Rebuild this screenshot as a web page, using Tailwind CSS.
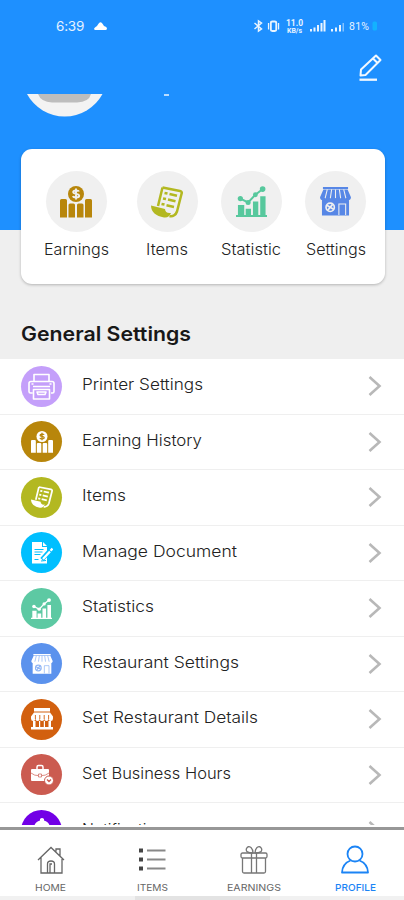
<!DOCTYPE html>
<html lang="en">
<head>
<meta charset="utf-8">
<title>Profile</title>
<script src="https://cdn.jsdelivr.net/npm/@tailwindcss/browser@4"></script>
</head>
<body class="bg-[#efefef]">
<svg class="hidden">
  <symbol id="coins" viewBox="0 0 32 32">
    <path fill="currentColor" d="M0 14.500q0-1.500 1.500-1.500h4q1.500 0 1.500 1.500V31.500H0zM8.500 19q0-1.500 1.500-1.500h3.500q1.500 0 1.500 1.500v12.500H8.500zM17 19q0-1.500 1.500-1.500H22q1.500 0 1.500 1.500v12.500H17zM25 14.500q0-1.500 1.500-1.500h4q1.500 0 1.500 1.500v17h-7z"/>
    <circle cx="16" cy="8" r="8" fill="currentColor"/>
    <path fill="none" stroke="var(--hole)" stroke-width="1.900" d="M19 5.500c-.5-1.300-5.800-1.700-5.800.6 0 2.400 6 1.200 6 3.700 0 2.300-5.700 2.200-6.200.2M16 2.500v11"/>
  </symbol>
  <symbol id="receipt" viewBox="0 0 32 32">
    <path fill="none" stroke="currentColor" stroke-width="2.500" stroke-linejoin="round" d="M11.500 1.500L29 5c2 .5 2 1.500 1.500 3L26 25.500c-1 3-4 5.500-7.500 4.500M11.500 1.500L7 20"/>
    <path fill="currentColor" d="M0 19.500l14 3.500c.3 3 2 4.500 6 4-1 3-3.500 5-7 4.500C5 30 0 26 0 19.500z"/>
    <path fill="none" stroke="currentColor" stroke-width="2.600" d="M13.500 7l3 .6M18.500 8l7.500 1.700M12 12.500l3 .6M17 13.600l7.500 1.700M10.500 18l3 .6M15.500 19.200l7.500 1.700"/>
  </symbol>
  <symbol id="chart" viewBox="0 0 32 32">
    <path fill="currentColor" d="M0 30h32v2H0zM2 19.500h6.500V31H2zM10 23.500h5.500V31H10zM17.500 16H23v15h-5.500zM25 10.500h5.500V31H25z"/>
    <path fill="none" stroke="currentColor" stroke-width="2" d="M4.500 13l8 4 7.500-8 7-5.500"/>
    <g fill="currentColor"><circle cx="4.500" cy="13" r="2.700"/><circle cx="12.500" cy="17" r="2.600"/><circle cx="20" cy="9" r="2.500"/><circle cx="27.500" cy="3.200" r="2.900"/></g>
  </symbol>
  <symbol id="store" viewBox="0 0 32 30">
    <path fill="currentColor" d="M3 0h26v2H3zM2 12h28v17.500H2zM3.500 2.500h25L32 10.500c0 4-4.500 4-5.300 1-.8 3-4.600 3-5.400 0-.8 3-4.500 3-5.300 0-.8 3-4.500 3-5.300 0-.8 3-4.600 3-5.400 0C4.500 14.500 0 14.500 0 10.500z"/>
    <path fill="none" stroke="var(--hole)" stroke-width="1.100" d="M7.500 2.500l-2.200 9M12 2.500l-1.300 9M16 2.500v9M20 2.500l1.300 9M24.500 2.500l2.200 9M19.500 29V17.500h7V29"/>
    <circle cx="10.500" cy="21" r="4.300" fill="none" stroke="var(--hole)" stroke-width="1.700"/>
    <path stroke="var(--hole)" stroke-width="1.800" d="M7 19l7 4M8 24l5-6"/>
  </symbol>
  <symbol id="chev" viewBox="0 0 14 20"><path fill="none" stroke="#b8b8b8" stroke-width="2.600" d="M1.500 1L11.500 10l-10 9"/></symbol>
</svg>

<div class="flex h-[900px] w-[404px] flex-col overflow-hidden bg-[#efefef] font-[Inter,sans-serif]">
  <header class="h-[230px] shrink-0 bg-[#1e90ff]">
    <div class="flex h-[52px] items-center pl-[56px] pr-[25px] text-white">
      <span class="w-[38px] text-[13.500px] font-normal tracking-[-0.2px] text-[#e5f2ff]">6:39</span>
      <svg class="h-[8px] w-[13px]" viewBox="0 0 13 8"><path fill="#fff" d="M1 8Q-.5 7.500.5 6q.9-1 2.500-2Q5 .2 6.500.2T10 4q3 .8 3 2.500-.2 1.500-1.500 1.500z"/></svg>
      <svg class="ml-auto h-[16px] w-[126px] opacity-90" viewBox="0 0 126 16">
        <path fill="none" stroke="#fff" stroke-width="1.500" d="M1.500 5l7 6-3 2V3l3 2-7 6"/>
        <rect x="17.800" y="3.500" width="5.500" height="9.500" rx="1.500" fill="none" stroke="#fff" stroke-width="1.900"/>
        <path stroke="#fff" stroke-width="1.200" d="M15.500 5v6.500M25.600 5v6.500"/>
        <text x="33" y="8" font-family="Roboto" font-weight="700" font-size="9" textLength="17" lengthAdjust="spacingAndGlyphs" fill="#fff">11.0</text>
        <text x="34" y="15" font-family="Roboto" font-weight="700" font-size="7" textLength="15" lengthAdjust="spacingAndGlyphs" fill="#fff">KB/s</text>
        <path fill="#fff" d="M57 11h2v2.500h-2zM60.500 9.500h2v4h-2zM64 7h2v6.500h-2zM67.500 5h2v8.500h-2zM70.500 2h2v11.500h-2zM78 11h2v2.500h-2zM82 9.500h2v4h-2zM86 7h2v6.500h-2z"/>
        <path fill="#fff" opacity=".5" d="M89.500 5H91v8.500h-1.500z"/>
        <text x="96" y="12" font-family="Roboto" font-size="10.500" textLength="20" fill="#fff">81%</text>
        <rect x="119.500" y="3.500" width="4.500" height="9" rx="1.500" fill="#12b6ff"/>
      </svg>
    </div>
    <div class="flex h-[42px] justify-end pr-[21px]">
      <svg class="h-[32px] w-[26px]" viewBox="0 0 26 32"><path fill="none" stroke="#f2f8ff" stroke-width="2" stroke-linejoin="round" d="M3.500 23.500l.5-6L19 3.500l4.500 4.500L8.500 23zM16 6.500l4.500 4.500"/><path stroke="#f2f8ff" stroke-width="2.300" d="M2.500 27.700H20"/></svg>
    </div>
    <div class="flex h-[55px]">
      <svg class="ml-[27px] h-[23px] w-[76px]" viewBox="0 0 76 23"><path fill="#f3f3f3" d="M0 0h75.500A43 43 0 0 1 0 0z"/><path fill="#bdbdbd" d="M11 0h53q-2 8-14 8.500H25Q14 8 11 0z"/></svg>
      <span class="ml-[61px] h-[1.500px] w-[5px] bg-[#b9dcff]"></span>
    </div>
    <section class="relative ml-[21px] flex h-[135px] w-[364px] rounded-[11px] bg-white pl-[10px] pt-[22px] shadow-[0_1px_3px_rgba(0,0,0,0.25)] [--hole:#f0f0f0]">
      <a class="flex w-[90px] flex-col items-center"><span class="flex size-[61px] items-center justify-center rounded-full bg-[#f0f0f0] text-[#b8860b]"><svg class="size-[32px]"><use href="#coins"/></svg></span><svg class="mt-[5px] h-[24px] w-[65px] overflow-visible"><text x="0" y="17.500" font-size="15.500" font-weight="300" textLength="65" lengthAdjust="spacingAndGlyphs" fill="#222">Earnings</text></svg></a>
      <a class="flex w-[92px] flex-col items-center"><span class="flex size-[61px] items-center justify-center rounded-full bg-[#f0f0f0] text-[#b3b821]"><svg class="size-[32px]"><use href="#receipt"/></svg></span><svg class="mt-[5px] h-[24px] w-[42px] overflow-visible"><text x="0" y="17.500" font-size="15.500" font-weight="300" textLength="42" lengthAdjust="spacingAndGlyphs" fill="#222">Items</text></svg></a>
      <a class="flex w-[76px] flex-col items-center"><span class="flex size-[61px] items-center justify-center rounded-full bg-[#f0f0f0] text-[#57c89d]"><svg class="size-[31px]"><use href="#chart"/></svg></span><svg class="mt-[5px] h-[24px] w-[60px] overflow-visible"><text x="0" y="17.500" font-size="15.500" font-weight="300" textLength="60" lengthAdjust="spacingAndGlyphs" fill="#222">Statistic</text></svg></a>
      <a class="flex w-[93px] flex-col items-center"><span class="flex size-[61px] items-center justify-center rounded-full bg-[#f0f0f0] text-[#5787e6]"><svg class="h-[29px] w-[31px]"><use href="#store"/></svg></span><svg class="mt-[5px] h-[24px] w-[60px] overflow-visible"><text x="0" y="17.500" font-size="15.500" font-weight="300" textLength="60" lengthAdjust="spacingAndGlyphs" fill="#222">Settings</text></svg></a>
    </section>
  </header>

  <h2 class="h-[129px] shrink-0 pl-[21px] pt-[86px]"><svg class="h-[36px] w-[180px]"><text x="0" y="24.500" font-size="20" font-weight="600" textLength="170" lengthAdjust="spacingAndGlyphs" fill="#181818">General Settings</text></svg></h2>

  <main class="h-[466px] shrink-0 overflow-hidden bg-white text-white">
    <div class="flex h-[55.500px] items-center border-b border-[#efefef] pl-[21px] pr-[22px]">
      <span class="flex size-[41px] items-center justify-center rounded-full bg-[#c49ffa]"><svg class="size-[29px]" viewBox="0 0 29 29" fill="none" stroke="#fff" stroke-width="1.600" stroke-linejoin="round"><path d="M7 9.500V2.500h15v7M5.500 21H3.500Q2 21 2 19.500v-8q0-2 2-2h21q2 0 2 2v8q0 1.500-1.500 1.500H24M6 14.500h17M6.500 17.500h16v9.500h-16zM4.500 12h2M22.500 12h2M10 20h9l-1 2.500h-7z"/></svg></span>
      <svg class="ml-[20px] h-[28px] w-[200px]"><text x="0" y="18" font-size="15.500" font-weight="300" textLength="121" lengthAdjust="spacingAndGlyphs" fill="#222">Printer Settings</text></svg><svg class="ml-auto h-[20px] w-[14px]"><use href="#chev"/></svg>
    </div>
    <div class="flex h-[55.500px] items-center border-b border-[#efefef] pl-[21px] pr-[22px]">
      <span class="flex size-[41px] items-center justify-center rounded-full bg-[#b8860b] [--hole:#b8860b]"><svg class="size-[22px]"><use href="#coins"/></svg></span>
      <svg class="ml-[20px] h-[28px] w-[200px]"><text x="0" y="18" font-size="15.500" font-weight="300" textLength="120" lengthAdjust="spacingAndGlyphs" fill="#222">Earning History</text></svg><svg class="ml-auto h-[20px] w-[14px]"><use href="#chev"/></svg>
    </div>
    <div class="flex h-[55.500px] items-center border-b border-[#efefef] pl-[21px] pr-[22px]">
      <span class="flex size-[41px] items-center justify-center rounded-full bg-[#b3b821]"><svg class="size-[22px]"><use href="#receipt"/></svg></span>
      <svg class="ml-[20px] h-[28px] w-[200px]"><text x="0" y="18" font-size="15.500" font-weight="300" textLength="44" lengthAdjust="spacingAndGlyphs" fill="#222">Items</text></svg><svg class="ml-auto h-[20px] w-[14px]"><use href="#chev"/></svg>
    </div>
    <div class="flex h-[55.500px] items-center border-b border-[#efefef] pl-[21px] pr-[22px]">
      <span class="flex size-[41px] items-center justify-center rounded-full bg-[#00bfff]"><svg class="size-[22px]" viewBox="0 0 22 22"><path fill="#fff" d="M1 0h10v5h5v16.500H1z"/><path fill="#fff" d="M12 0l4 4h-4z"/><path fill="none" stroke="#00bfff" stroke-width="1.100" d="M3.500 7.500h9M3.500 10h8M3.500 12.500h6M3.500 17.500h4"/><path stroke="#00bfff" stroke-width="4.500" d="M19 8.500l-8 9"/><path stroke="#fff" stroke-width="2.300" d="M21.500 6.500l-2 2.200M19 9.500l-7 7.500"/><path stroke="#00bfff" d="M10 19l5-.5"/></svg></span>
      <svg class="ml-[20px] h-[28px] w-[200px]"><text x="0" y="18" font-size="15.500" font-weight="300" textLength="155" lengthAdjust="spacingAndGlyphs" fill="#222">Manage Document</text></svg><svg class="ml-auto h-[20px] w-[14px]"><use href="#chev"/></svg>
    </div>
    <div class="flex h-[55.500px] items-center border-b border-[#efefef] pl-[21px] pr-[22px]">
      <span class="flex size-[41px] items-center justify-center rounded-full bg-[#5dc9a3]"><svg class="size-[21px]"><use href="#chart"/></svg></span>
      <svg class="ml-[20px] h-[28px] w-[200px]"><text x="0" y="18" font-size="15.500" font-weight="300" textLength="72" lengthAdjust="spacingAndGlyphs" fill="#222">Statistics</text></svg><svg class="ml-auto h-[20px] w-[14px]"><use href="#chev"/></svg>
    </div>
    <div class="flex h-[55.500px] items-center border-b border-[#efefef] pl-[21px] pr-[22px]">
      <span class="flex size-[41px] items-center justify-center rounded-full bg-[#5b92ed] [--hole:#8fb5f5]"><svg class="h-[20px] w-[22px]"><use href="#store"/></svg></span>
      <svg class="ml-[20px] h-[28px] w-[200px]"><text x="0" y="18" font-size="15.500" font-weight="300" textLength="157" lengthAdjust="spacingAndGlyphs" fill="#222">Restaurant Settings</text></svg><svg class="ml-auto h-[20px] w-[14px]"><use href="#chev"/></svg>
    </div>
    <div class="flex h-[55.500px] items-center border-b border-[#efefef] pl-[21px] pr-[22px]">
      <span class="flex size-[41px] items-center justify-center rounded-full bg-[#d2600f]"><svg class="size-[22px]" viewBox="0 0 22 22"><path fill="#fff" d="M3 0h16v3.500H3zM3 4.500h16l3 4v2H0v-2zM0 10.500h4.400q0 2.500-2.200 2.500T0 10.500zM4.400 10.500h4.400q0 2.500-2.200 2.500t-2.200-2.500zM8.800 10.500h4.400q0 2.500-2.200 2.500t-2.200-2.500zM13.200 10.500h4.400q0 2.500-2.200 2.500t-2.200-2.500zM17.600 10.500H22q0 2.500-2.200 2.500t-2.200-2.500zM2 13h2.500v6H2zM17.500 13H20v6h-2.500zM8 13h1.200v6H8zM12.800 13H14v6h-1.200zM0 19h22v2.500H0z"/><path stroke="#d2600f" stroke-width=".9" d="M4.400 7v4M8.800 7v4M13.200 7v4M17.600 7v4"/></svg></span>
      <svg class="ml-[20px] h-[28px] w-[200px]"><text x="0" y="18" font-size="15.500" font-weight="300" textLength="176" lengthAdjust="spacingAndGlyphs" fill="#222">Set Restaurant Details</text></svg><svg class="ml-auto h-[20px] w-[14px]"><use href="#chev"/></svg>
    </div>
    <div class="flex h-[55.500px] items-center border-b border-[#efefef] pl-[21px] pr-[22px]">
      <span class="flex size-[41px] items-center justify-center rounded-full bg-[#cb5b50]"><svg class="size-[22px] overflow-visible" viewBox="0 0 22 22"><path fill="#fff" d="M1 5h16q1 0 1 1v10q0 1-1 1H1q-1 0-1-1V6q0-1 1-1z"/><path fill="none" stroke="#fff" stroke-width="1.500" d="M6 5V3q0-1.500 1.500-1.500h3Q12 1.500 12 3v2"/><path fill="none" stroke="#cb5b50" stroke-width=".7" d="M0 9q4 3 7 2.500M18 9q-4 3-7 2.500M7.500 10h3v3h-3z"/><circle cx="18" cy="16.500" r="4.500" fill="#fff" stroke="#cb5b50" stroke-width="1"/><path fill="none" stroke="#cb5b50" stroke-width="1.300" d="M16 15.500l2 2 2-2"/></svg></span>
      <svg class="ml-[20px] h-[28px] w-[200px]"><text x="0" y="18" font-size="15.500" font-weight="300" textLength="149" lengthAdjust="spacingAndGlyphs" fill="#222">Set Business Hours</text></svg><svg class="ml-auto h-[20px] w-[14px]"><use href="#chev"/></svg>
    </div>
    <div class="flex h-[55.500px] items-center pl-[21px] pr-[22px]">
      <span class="flex size-[41px] items-center justify-center rounded-full bg-[#7200e6]"><svg class="h-[26px] w-[24px]" viewBox="0 0 24 26"><path fill="#fff" d="M10 1q2-2 4 0v1.500q6 1.500 6 8V18l3 3H1l3-3v-7.500q0-6.500 6-8zM9 22.500h6q-3 5-6 0z"/></svg></span>
      <svg class="ml-[20px] h-[28px] w-[200px]"><text x="0" y="18" font-size="15.500" font-weight="300" textLength="91" lengthAdjust="spacingAndGlyphs" fill="#222">Notifications</text></svg><svg class="ml-auto h-[20px] w-[14px]"><use href="#chev"/></svg>
    </div>
  </main>

  <nav class="flex h-[75px] shrink-0 flex-col bg-white">
    <div class="mt-[1.500px] h-[3px] bg-[#979797]"></div>
    <div class="grid h-[66px] w-[406px] shrink-0 grid-cols-4 pt-[15px]">
      <a class="flex flex-col items-center"><svg class="h-[30px] w-[30px]" viewBox="0 0 30 30" fill="none" stroke="#666" stroke-width="1.300"><path d="M2 15L15 2.500 28 15M5 12.500V28h21V12.500M20 6.500V4h4v7M11.500 28v-9q0-3 3.500-3t3.500 3v9M14 28v-9h2"/></svg><svg class="mt-[4px] h-[16px] w-[31px] overflow-visible"><text y="12" font-size="9.500" textLength="31" lengthAdjust="spacingAndGlyphs" fill="#666">HOME</text></svg></a>
      <a class="flex flex-col items-center"><svg class="h-[30px] w-[30px]" viewBox="0 0 30 30"><path fill="#444" d="M2 3.500h4v4H2zM2 12.500h4v4H2zM2 21.500h4v4H2z"/><path stroke="#888" stroke-width="2.200" d="M10 5.500h18.500M10 14.500h18.500M10 23.500h18.500"/></svg><svg class="mt-[4px] h-[16px] w-[31px] overflow-visible"><text y="12" font-size="9.500" textLength="31" lengthAdjust="spacingAndGlyphs" fill="#666">ITEMS</text></svg></a>
      <a class="flex flex-col items-center"><svg class="h-[30px] w-[30px]" viewBox="0 0 30 30" fill="none" stroke="#777" stroke-width="1.300"><rect x="2" y="8" width="26" height="5" rx="1.500"/><path d="M3.500 13v13.500q0 1.500 1.500 1.500h20q1.500 0 1.500-1.500V13M12.500 8v20M17.500 8v20"/><path d="M14 8Q6 8 7.500 3.500 9 .5 12 2.500q2 2 2 5.500zM16 8q8 0 6.500-4.500Q21 .5 18 2.500 16 4.500 16 8z"/></svg><svg class="mt-[4px] h-[16px] w-[54px] overflow-visible"><text y="12" font-size="9.500" textLength="54" lengthAdjust="spacingAndGlyphs" fill="#666">EARNINGS</text></svg></a>
      <a class="flex flex-col items-center"><svg class="h-[30px] w-[30px]" viewBox="0 0 30 30" fill="none" stroke="#1b84f5" stroke-width="1.800" stroke-linejoin="round"><circle cx="15" cy="9" r="7.500"/><path d="M10.500 15.500Q2.500 18.500 2 27.500h26q-.5-9-8.500-12"/></svg><svg class="mt-[4px] h-[16px] w-[41px] overflow-visible"><text y="12" font-size="9.500" font-weight="500" textLength="41" lengthAdjust="spacingAndGlyphs" fill="#1b84f5">PROFILE</text></svg></a>
    </div>
    <div class="flex h-[4.500px] bg-[#f1f1f1]"><span class="ml-[135px] w-[135px] bg-[#e3e3e3]"></span></div>
  </nav>
</div>
</body>
</html>
